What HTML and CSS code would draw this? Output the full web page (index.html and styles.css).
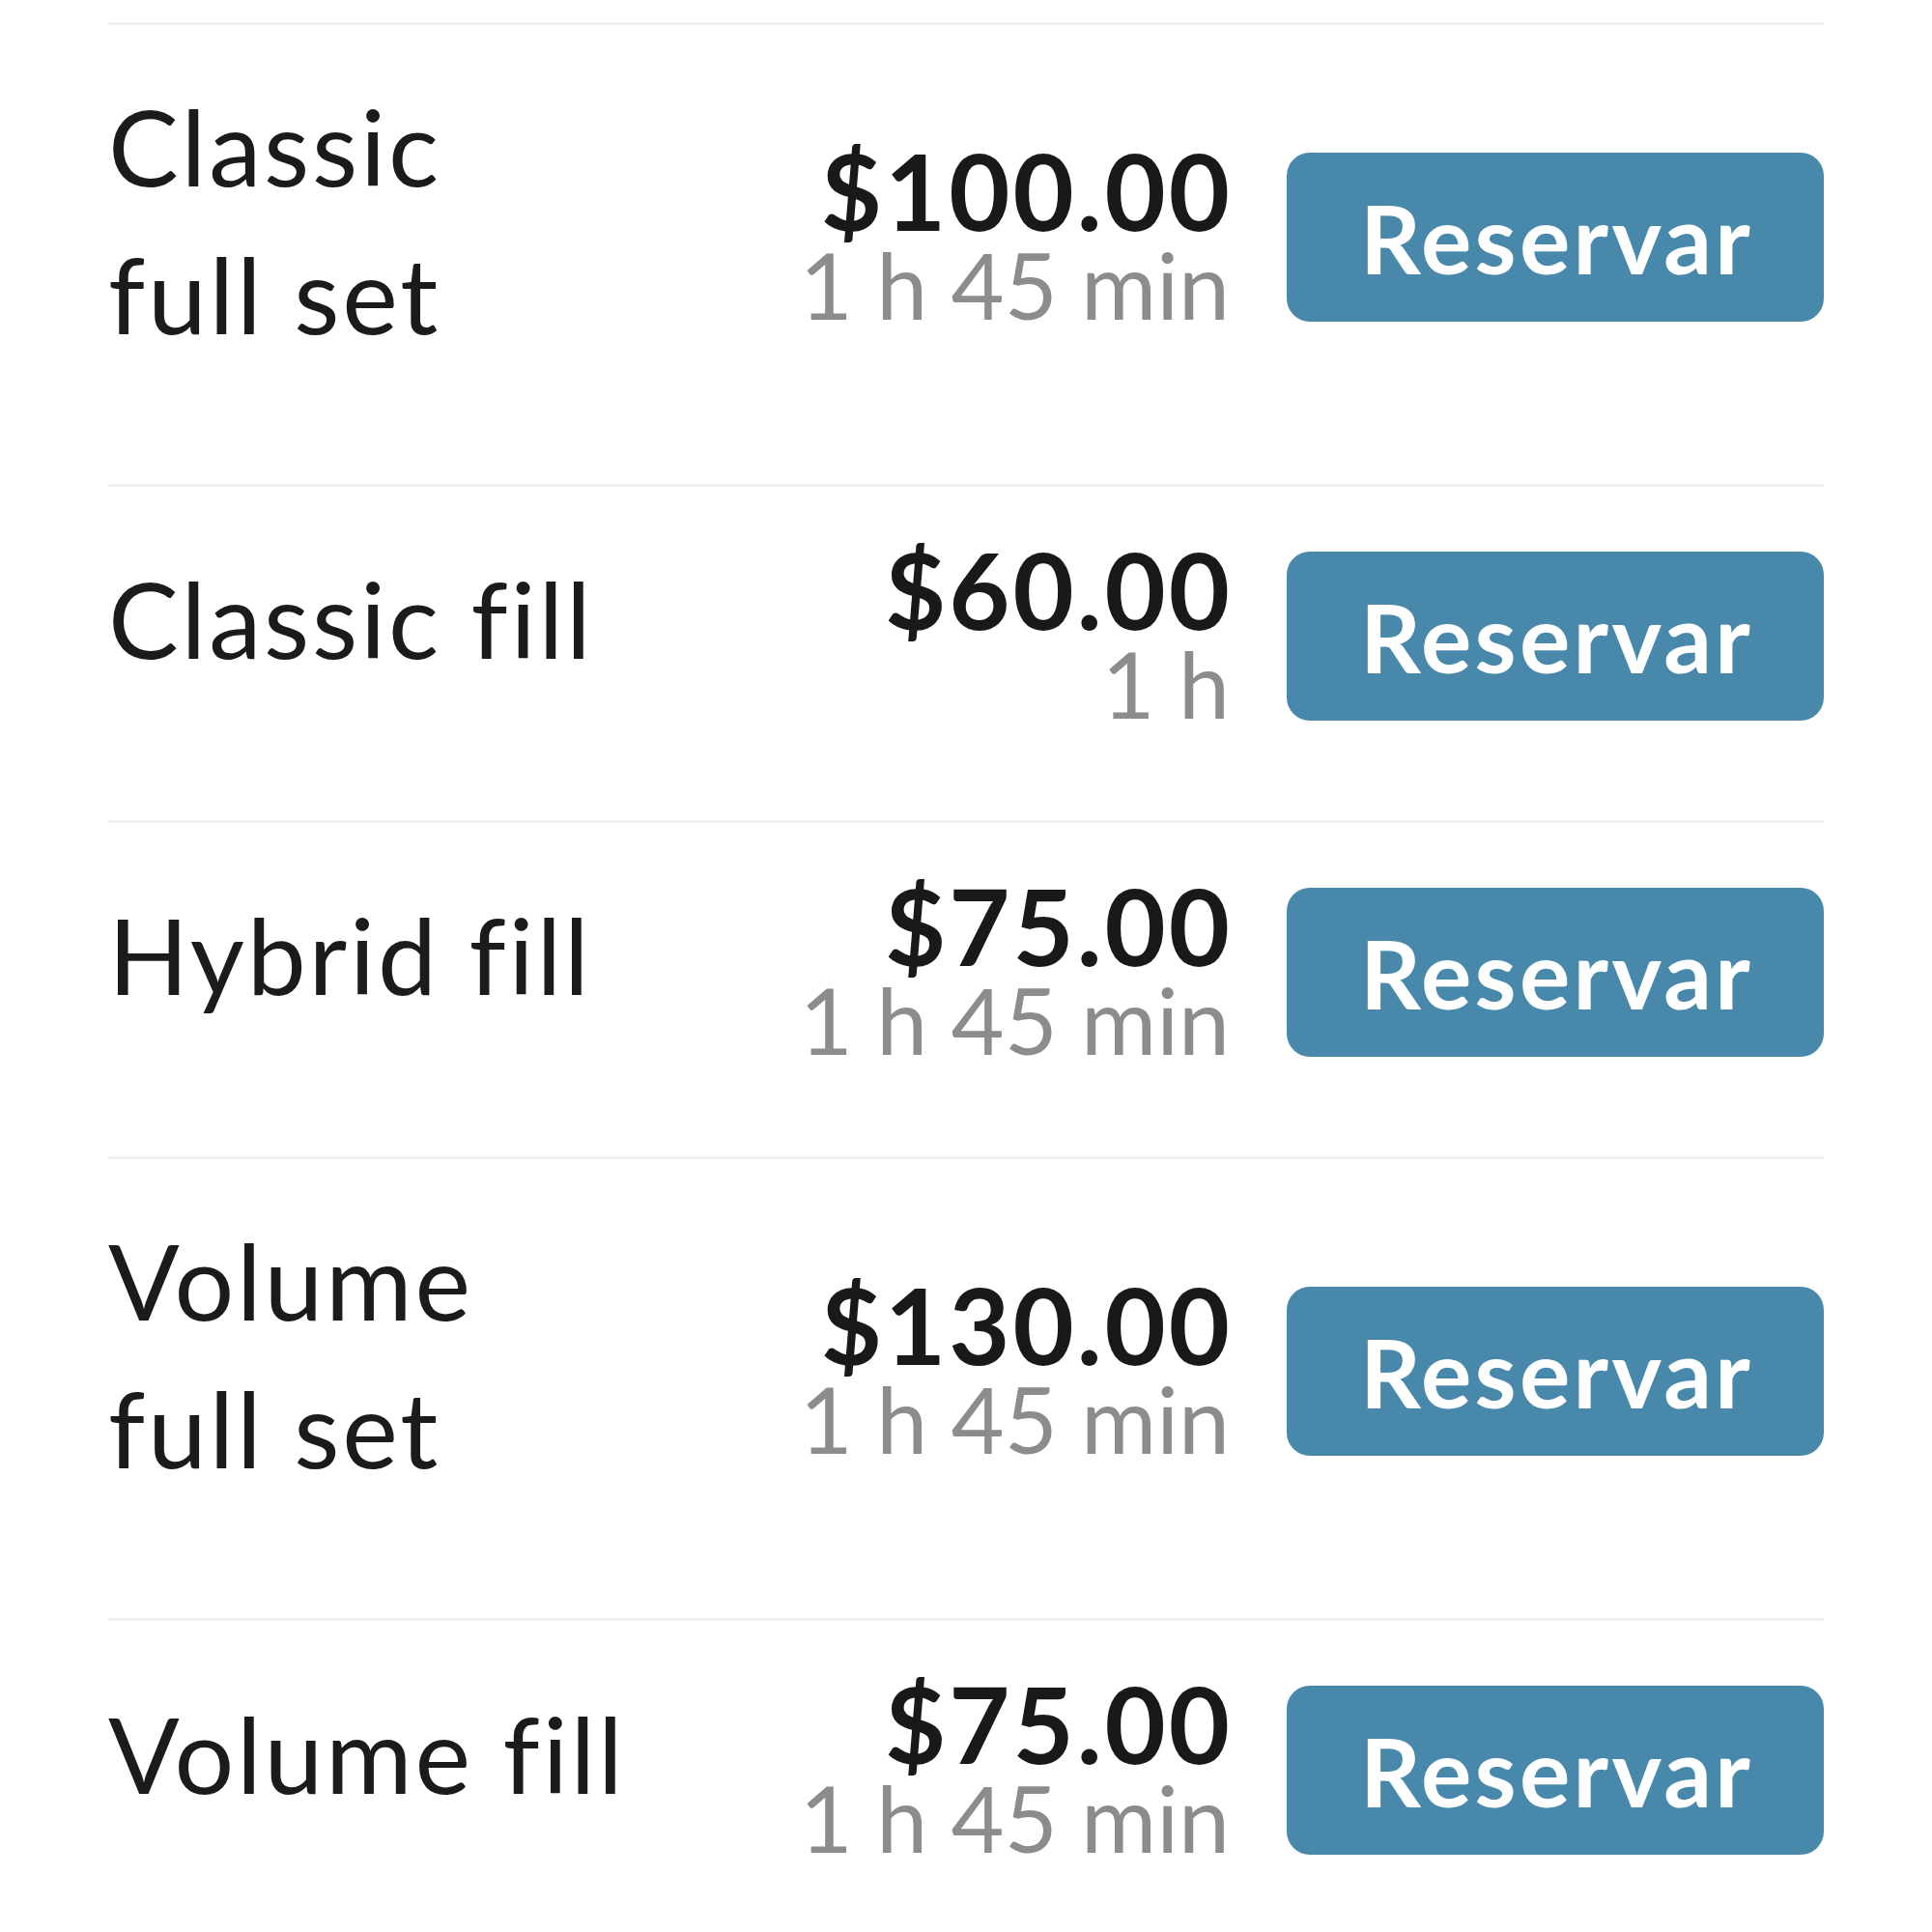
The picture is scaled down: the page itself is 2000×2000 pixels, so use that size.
FILE: index.html
```html
<!DOCTYPE html>
<html lang="es">
<head>
<meta charset="utf-8">
<title>Servicios</title>
<link rel="stylesheet" href="styles.css">
</head>
<body>
<div class="list">
  <div class="row">
    <div class="name">Classic <span class="nw">full set</span></div>
    <div class="meta"><div class="price">$100.00</div><div class="dur">1 h 45 min</div></div>
    <button class="book">Reservar</button>
  </div>
  <div class="row">
    <div class="name">Classic fill</div>
    <div class="meta"><div class="price">$60.00</div><div class="dur">1 h</div></div>
    <button class="book">Reservar</button>
  </div>
  <div class="row">
    <div class="name">Hybrid fill</div>
    <div class="meta"><div class="price">$75.00</div><div class="dur">1 h 45 min</div></div>
    <button class="book">Reservar</button>
  </div>
  <div class="row">
    <div class="name">Volume <span class="nw">full set</span></div>
    <div class="meta"><div class="price">$130.00</div><div class="dur">1 h 45 min</div></div>
    <button class="book">Reservar</button>
  </div>
  <div class="row">
    <div class="name">Volume fill</div>
    <div class="meta"><div class="price">$75.00</div><div class="dur">1 h 45 min</div></div>
    <button class="book">Reservar</button>
  </div>
</div>
</body>
</html>
```
FILE: styles.css
```css
html, body {
  margin: 0;
  padding: 0;
  background: #ffffff;
}
body {
  font-family: Lato, "Open Sans", sans-serif;
  color: #1b1b1b;
}
.list {
  padding: 23px 112px 0 112px;
}
.row {
  display: flex;
  align-items: center;
  border-top: 3px solid #f1f1f1;
  padding: 67px 0 103px 0;
}
.name {
  flex: 1;
  min-width: 0;
  font-size: 109px;
  line-height: 152.6px;
  font-weight: 400;
  letter-spacing: 2.8px;
  margin: -18px 0 18px 0;
}
.nw {
  white-space: nowrap;
}
.meta {
  flex: none;
  width: 560px;
  text-align: right;
  margin: -10px 0;
}
.price {
  font-size: 109px;
  line-height: 96px;
  font-weight: 700;
  letter-spacing: 3px;
  margin-right: -3px;
  color: #191919;
}
.dur {
  font-size: 95px;
  line-height: 98px;
  color: #8c8c8c;
}
.book {
  flex: none;
  margin-left: 59px;
  width: 556px;
  height: 175px;
  border: none;
  border-radius: 24px;
  background: #4889ab;
  color: #ffffff;
  font-family: Lato, "Open Sans", sans-serif;
  font-weight: 700;
  font-size: 98px;
  letter-spacing: 3.3px;
  padding: 0 0 0 3px;
}
```
